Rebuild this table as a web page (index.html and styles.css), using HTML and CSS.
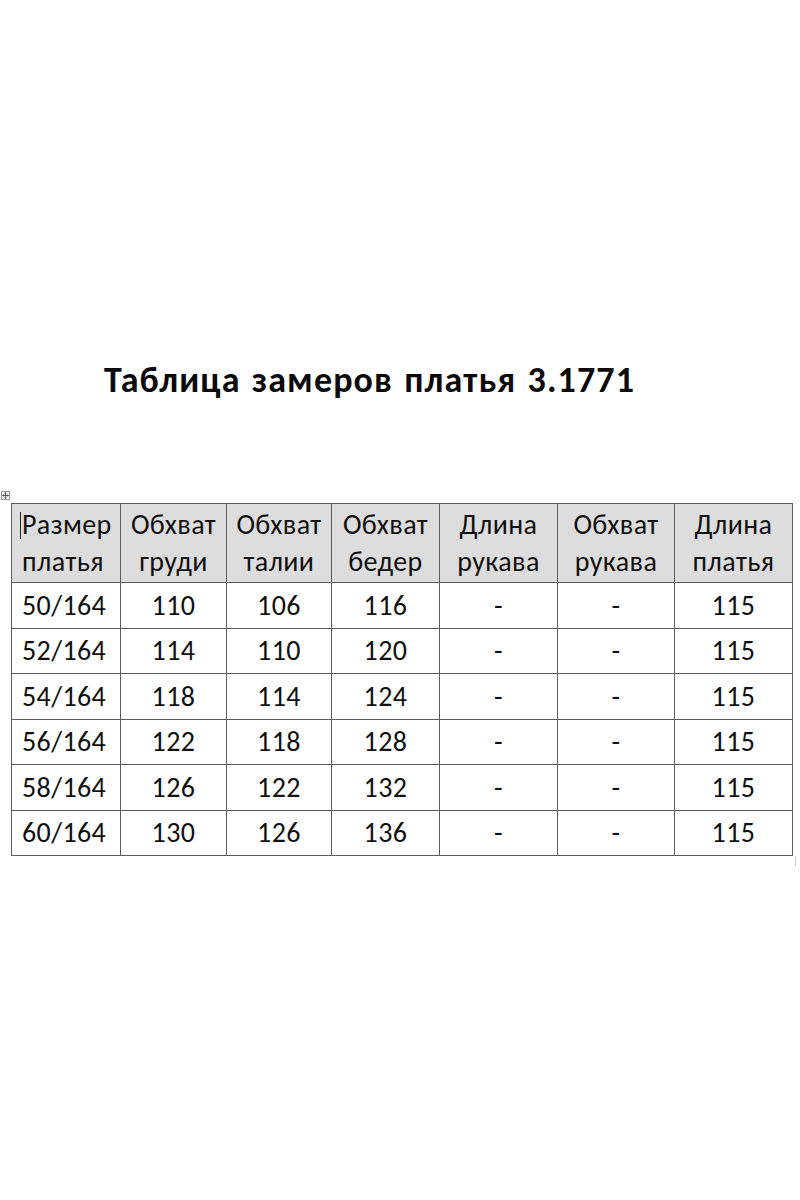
FILE: index.html
```html
<!DOCTYPE html>
<html lang="ru">
<head>
<meta charset="utf-8">
<title>Таблица замеров платья 3.1771</title>
<link rel="stylesheet" href="styles.css">
</head>
<body>
<div class="page">
  <h1 class="title">Таблица замеров платья 3.1771</h1>
  <div class="table-wrap">
    <span class="move-handle">
      <svg width="9" height="9" viewBox="0 0 9 9"><rect x="0.5" y="0.5" width="8" height="8" fill="#fff" stroke="#9a9a9a"/><path d="M4.5 1.5v6M1.5 4.5h6M3.5 2.5l1-1 1 1M3.5 6.5l1 1 1-1M2.5 3.5l-1 1 1 1M6.5 3.5l1 1-1 1" fill="none" stroke="#333" stroke-width="0.8"/></svg>
    </span>
    <table class="sizes">
      <colgroup>
        <col class="c1"><col class="c2"><col class="c3"><col class="c4"><col class="c5"><col class="c6"><col class="c7">
      </colgroup>
      <thead>
        <tr>
          <th class="first"><span class="caret"></span>Размер<br>платья</th>
          <th>Обхват<br>груди</th>
          <th>Обхват<br>талии</th>
          <th>Обхват<br>бедер</th>
          <th>Длина<br>рукава</th>
          <th>Обхват<br>рукава</th>
          <th>Длина<br>платья</th>
        </tr>
      </thead>
      <tbody>
        <tr><td class="first">50/164</td><td>110</td><td>106</td><td>116</td><td>-</td><td>-</td><td>115</td></tr>
        <tr><td class="first">52/164</td><td>114</td><td>110</td><td>120</td><td>-</td><td>-</td><td>115</td></tr>
        <tr><td class="first">54/164</td><td>118</td><td>114</td><td>124</td><td>-</td><td>-</td><td>115</td></tr>
        <tr><td class="first">56/164</td><td>122</td><td>118</td><td>128</td><td>-</td><td>-</td><td>115</td></tr>
        <tr><td class="first">58/164</td><td>126</td><td>122</td><td>132</td><td>-</td><td>-</td><td>115</td></tr>
        <tr><td class="first">60/164</td><td>130</td><td>126</td><td>136</td><td>-</td><td>-</td><td>115</td></tr>
      </tbody>
    </table>
    <span class="end-mark"></span>
  </div>
</div>
</body>
</html>
```
FILE: styles.css
```css
html, body {
  margin: 0;
  padding: 0;
  background: #ffffff;
}

.page {
  width: 800px;
  height: 1200px;
  font-family: "Carlito", "Lato", "Liberation Sans", sans-serif;
  color: #111111;
}

.title {
  margin: 0;
  padding-top: 359px;
  padding-left: 104px;
  font-size: 36px;
  line-height: 43px;
  font-weight: 700;
  letter-spacing: 1.1px;
  word-spacing: 2px;
  color: #0a0a0a;
  white-space: nowrap;
}

.table-wrap {
  position: relative;
  margin-top: 101px;
  margin-left: 11px;
  width: 782px;
}

.move-handle {
  position: absolute;
  left: -10px;
  top: -12px;
  width: 9px;
  height: 9px;
  display: block;
  line-height: 0;
}

.end-mark {
  position: absolute;
  right: -3px;
  bottom: -10px;
  width: 1px;
  height: 10px;
  background: #c8c8c8;
}

.sizes {
  border-collapse: collapse;
  table-layout: fixed;
  width: 782px;
  font-size: 28px;
  letter-spacing: 0.4px;
}

.c1 { width: 109px; }
.c2 { width: 106px; }
.c3 { width: 105px; }
.c4 { width: 108px; }
.c5 { width: 118px; }
.c6 { width: 117px; }
.c7 { width: 118px; }

.sizes th,
.sizes td {
  border: 1.5px solid #5c5c5c;
  text-align: center;
  padding: 0;
  white-space: nowrap;
}

.sizes th {
  background: #dddddd;
  font-weight: 400;
  height: 78px;
  line-height: 37px;
}

.sizes td {
  height: 44.5px;
  line-height: 43px;
}

.sizes .first {
  text-align: left;
  padding-left: 10px;
}

.caret {
  display: inline-block;
  width: 0;
  height: 27px;
  border-left: 1px solid #222;
  vertical-align: -5px;
  margin-left: -2px;
  margin-right: 1px;
}
```
